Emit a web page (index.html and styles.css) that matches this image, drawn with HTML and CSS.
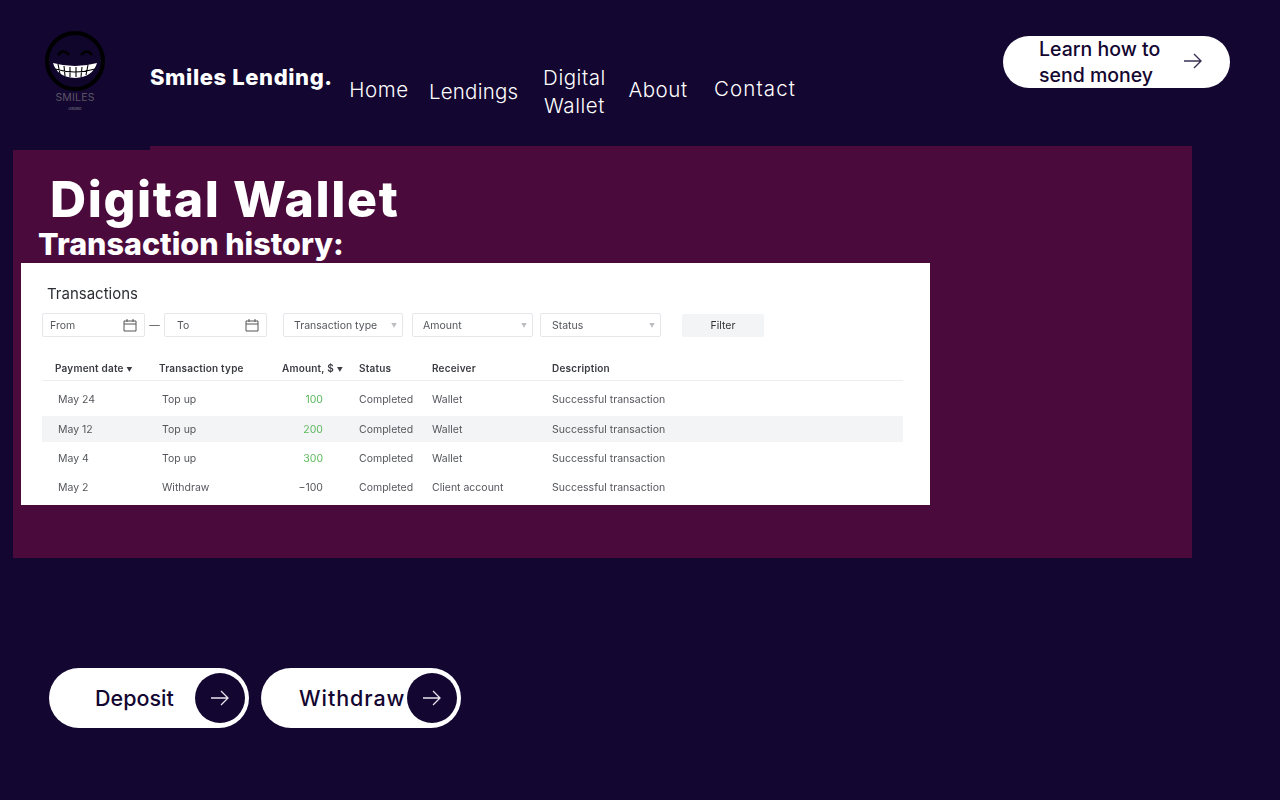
FILE: index.html
```html
<!DOCTYPE html>
<html lang="en">
<head>
<meta charset="utf-8">
<title>Smiles Lending - Digital Wallet</title>
<link rel="stylesheet" href="styles.css">
</head>
<body>
<header class="header">
  <div class="logo">
    <svg class="logo-face" width="60" height="60" viewBox="0 0 60 60">
      <circle cx="30" cy="30" r="28" fill="#10052a" stroke="#000" stroke-width="4"/>
      <path d="M13 24q5-7 11 0M36 24q6-7 11 0" fill="none" stroke="#000" stroke-width="2.4"/>
      <path d="M8 32q22 6 44 0q-4 14-22 15q-18-1-22-15z" fill="#fff"/>
      <path d="M13 33l2 10M19 35l1 10M25 36v10M31 36v10M37 36l-1 10M43 34l-2 10M10 38q20 6 40 0" fill="none" stroke="#000" stroke-width="1.1"/>
    </svg>
    <span class="logo-name">SMILES</span>
    <span class="logo-sub">LENDING</span>
  </div>
  <div class="brand">Smiles Lending.</div>
  <nav class="nav">
    <a class="nav-item nav-home">Home</a>
    <a class="nav-item nav-lendings">Lendings</a>
    <a class="nav-item nav-wallet">Digital<br>Wallet</a>
    <a class="nav-item nav-about">About</a>
    <a class="nav-item nav-contact">Contact</a>
  </nav>
  <a class="cta">
    <span class="cta-text">Learn how to<br>send money</span>
    <svg class="arrow" width="20" height="18" viewBox="0 0 20 18"><path d="M1 9h17M11 2l7 7-7 7" fill="none" stroke="#3a3054" stroke-width="1.4"/></svg>
  </a>
</header>

<main>
  <div class="panel-tab"></div>
  <section class="panel">
    <h1 class="title">Digital Wallet</h1>
    <h2 class="subtitle">Transaction history:</h2>
    <div class="card">
      <h3 class="card-title">Transactions</h3>
      <div class="filters">
        <div class="field field-date">From
          <svg class="cal" width="14" height="14" viewBox="0 0 14 14"><path d="M1 3h12v10H1zM1 6h12M4 1v3M10 1v3" fill="none" stroke="#555" stroke-width="1"/></svg>
        </div>
        <span class="dash">—</span>
        <div class="field field-date field-to">To
          <svg class="cal" width="14" height="14" viewBox="0 0 14 14"><path d="M1 3h12v10H1zM1 6h12M4 1v3M10 1v3" fill="none" stroke="#555" stroke-width="1"/></svg>
        </div>
        <div class="field field-type">Transaction type<span class="caret">▼</span></div>
        <div class="field field-amount">Amount<span class="caret">▼</span></div>
        <div class="field field-status">Status<span class="caret">▼</span></div>
        <div class="filter-btn">Filter</div>
      </div>
      <div class="row row-head">
        <span class="c1">Payment date <i class="sort">▼</i></span><span>Transaction type</span><span>Amount, $ <i class="sort">▼</i></span><span>Status</span><span>Receiver</span><span>Description</span>
      </div>
      <div class="row row-body">
        <span class="c1b">May 24</span><span class="c2b">Top up</span><span class="amt pos">100</span><span>Completed</span><span>Wallet</span><span>Successful transaction</span>
      </div>
      <div class="row row-body row-alt">
        <span class="c1b">May 12</span><span class="c2b">Top up</span><span class="amt pos">200</span><span>Completed</span><span>Wallet</span><span>Successful transaction</span>
      </div>
      <div class="row row-body">
        <span class="c1b">May 4</span><span class="c2b">Top up</span><span class="amt pos">300</span><span>Completed</span><span>Wallet</span><span>Successful transaction</span>
      </div>
      <div class="row row-body">
        <span class="c1b">May 2</span><span class="c2b">Withdraw</span><span class="amt">−100</span><span>Completed</span><span>Client account</span><span>Successful transaction</span>
      </div>
    </div>
  </section>

  <div class="actions">
    <a class="pill pill-deposit"><span class="pill-text">Deposit</span>
      <span class="pill-icon"><svg width="20" height="18" viewBox="0 0 20 18"><path d="M1 9h17M11 2l7 7-7 7" fill="none" stroke="#e8e4ee" stroke-width="1.3"/></svg></span>
    </a>
    <a class="pill pill-withdraw"><span class="pill-text">Withdraw</span>
      <span class="pill-icon"><svg width="20" height="18" viewBox="0 0 20 18"><path d="M1 9h17M11 2l7 7-7 7" fill="none" stroke="#e8e4ee" stroke-width="1.3"/></svg></span>
    </a>
  </div>
</main>
</body>
</html>
```
FILE: styles.css
```css
* { box-sizing: border-box; }
html, body { margin: 0; height: 100%; }
body {
  background: #130630;
  color: #fff;
  font-family: "Open Sans", sans-serif;
  width: 1280px;
  height: 800px;
  overflow: hidden;
}
.header {
  height: 146px;
  display: flex;
  align-items: flex-start;
  padding: 0 50px 0 45px;
}
.logo {
  width: 60px;
  margin-top: 31px;
  display: flex;
  flex-direction: column;
  align-items: center;
}
.logo-face { display: block; flex: none; }
.logo-name { font: 400 10.5px/12px Inter, sans-serif; letter-spacing: 0.2px; color: #5a5564; margin-top: 1px; }
.logo-sub { font: 400 3px/5px Inter, sans-serif; color: #8d8a96; margin-top: 3px; }
.brand {
  margin: 62px 0 0 45px;
  width: 199px;
  font: 800 22px/30px Inter, sans-serif;
  letter-spacing: 0.6px;
  white-space: nowrap;
}
.nav { display: flex; align-items: flex-start; }
.nav-item {
  font: 300 20.5px/28px Inter, sans-serif;
  letter-spacing: 0.55px;
  color: #fff;
  text-align: center;
  white-space: nowrap;
}
.nav-home { margin-top: 76px; width: 60px; }
.nav-lendings { margin: 78px 0 0 20px; width: 89px; letter-spacing: 0.2px; }
.nav-wallet { margin: 64px 0 0 25px; width: 63px; }
.nav-about { margin: 76px 0 0 22px; width: 60px; }
.nav-contact { margin: 75px 0 0 26px; width: 81px; letter-spacing: 1.1px; }
.cta {
  margin: 36px 0 0 auto;
  width: 227px;
  height: 52px;
  border-radius: 26px;
  background: #fff;
  color: #130630;
  display: flex;
  align-items: center;
  padding-left: 36px;
}
.cta-text { font: 500 19.5px/26px Inter, sans-serif; width: 144px; white-space: nowrap; }
.arrow { display: block; margin-top: -2px; }

.panel-tab {
  margin-left: 150px;
  width: 1042px;
  height: 4px;
  background: #4a0b3c;
}
.panel {
  margin-left: 13px;
  width: 1179px;
  height: 408px;
  background: #4a0b3c;
  padding: 23px 0 0 8px;
}
.title {
  margin: 0 0 0 29px;
  font: 800 50px/52px Inter, sans-serif;
  letter-spacing: 1.6px;
  white-space: nowrap;
}
.subtitle {
  margin: 0 0 0 17px;
  font: 800 30.5px/38px Inter, sans-serif;
  white-space: nowrap;
}
.card {
  width: 909px;
  height: 242px;
  background: #fff;
  padding: 21px 27px 0 21px;
  color: #3f4147;
  font-family: Inter, sans-serif;
  filter: blur(0.3px);
}
.card-title { margin: 0 0 9px 5px; font: 400 15px/20px Inter, sans-serif; color: #2c2e33; }
.filters { display: flex; align-items: center; height: 24px; font-size: 10.5px; }
.field {
  height: 24px;
  border: 1px solid #e6e7ea;
  border-radius: 2px;
  display: flex;
  align-items: center;
  justify-content: space-between;
  color: #55575c;
}
.field-date { width: 103px; padding: 0 7px; }
.field-to { margin-right: 16px; padding-left: 12px; }
.dash { width: 19px; text-align: center; color: #555; }
.field-type { width: 120px; padding: 0 5px 0 10px; margin-right: 9px; }
.field-amount { width: 121px; padding: 0 5px 0 10px; margin-right: 7px; }
.field-status { width: 121px; padding: 0 5px 0 11px; margin-right: 21px; }
.caret { font-size: 6px; color: #bdbec2; }
.filter-btn {
  width: 82px;
  height: 23px;
  background: #f3f4f6;
  border-radius: 2px;
  display: flex;
  align-items: center;
  justify-content: center;
  color: #333;
}
.row {
  display: grid;
  grid-template-columns: 117px 123px 77px 73px 120px 1fr;
  width: 861px;
  align-items: center;
  font-size: 10.5px;
  white-space: nowrap;
}
.row-head {
  margin: 20px 0 4px;
  height: 24px;
  padding-bottom: 2px;
  border-bottom: 1px solid #eceef0;
  font-size: 10px;
  font-weight: 600;
  letter-spacing: 0.2px;
  color: #3a3c41;
}
.row-body { height: 29px; color: #55575c; }
.row-alt { background: #f3f4f6; height: 26px; margin: 2px 0; }
.c1 { padding-left: 13px; }
.sort { font-style: normal; font-size: 6px; }
.c1b { padding-left: 16px; }
.c2b { padding-left: 3px; }
.amt { text-align: right; padding-right: 36px; }
.pos { color: #5cb85c; }

.actions {
  display: flex;
  gap: 12px;
  margin: 110px 0 0 49px;
}
.pill {
  width: 200px;
  height: 60px;
  border-radius: 30px;
  background: #fff;
  display: flex;
  align-items: center;
  justify-content: space-between;
  color: #130630;
  padding-right: 4px;
}
.pill-deposit { padding-left: 46px; }
.pill-withdraw { padding-left: 38px; }
.pill-text { font: 500 21.5px/28px Inter, sans-serif; white-space: nowrap; }
.pill-withdraw .pill-text { letter-spacing: 0.95px; }
.pill-icon {
  width: 50px;
  height: 50px;
  border-radius: 50%;
  background: #130630;
  display: flex;
  align-items: center;
  justify-content: center;
}
```
